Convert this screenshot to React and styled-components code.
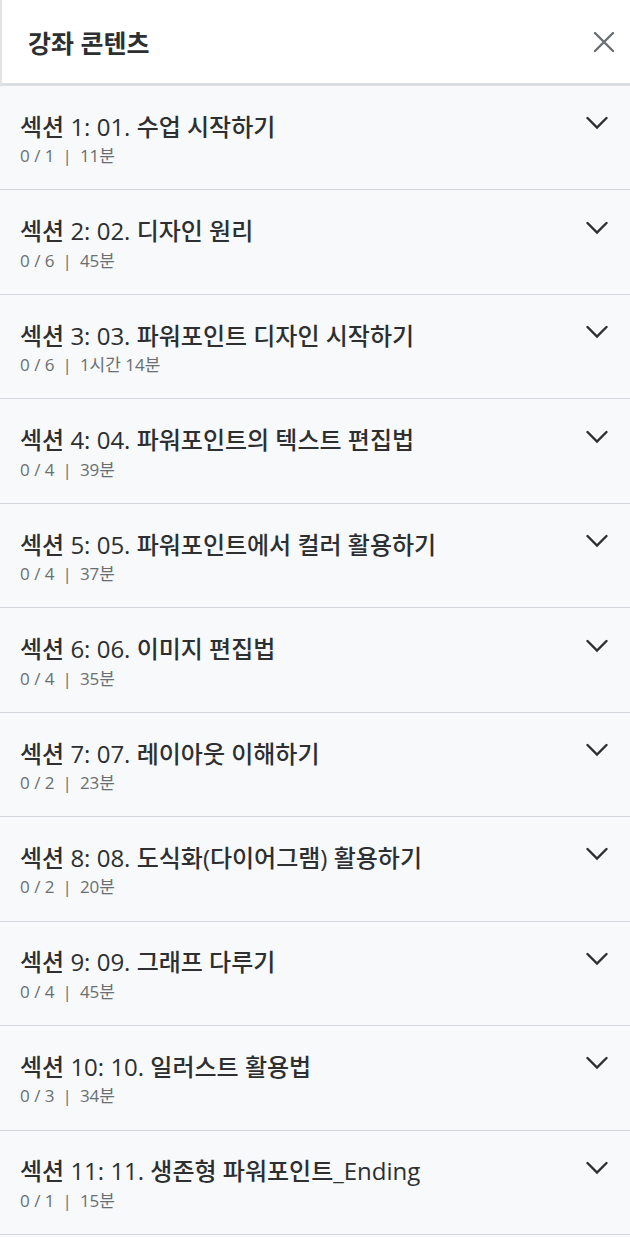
import React from "react";
import styled, { createGlobalStyle } from "styled-components";

const sections = [
  { title: "섹션 1: 01. 수업 시작하기", done: 0, total: 1, time: "11분" },
  { title: "섹션 2: 02. 디자인 원리", done: 0, total: 6, time: "45분" },
  { title: "섹션 3: 03. 파워포인트 디자인 시작하기", done: 0, total: 6, time: "1시간 14분" },
  { title: "섹션 4: 04. 파워포인트의 텍스트 편집법", done: 0, total: 4, time: "39분" },
  { title: "섹션 5: 05. 파워포인트에서 컬러 활용하기", done: 0, total: 4, time: "37분" },
  { title: "섹션 6: 06. 이미지 편집법", done: 0, total: 4, time: "35분" },
  { title: "섹션 7: 07. 레이아웃 이해하기", done: 0, total: 2, time: "23분" },
  { title: "섹션 8: 08. 도식화(다이어그램) 활용하기", done: 0, total: 2, time: "20분" },
  { title: "섹션 9: 09. 그래프 다루기", done: 0, total: 4, time: "45분" },
  { title: "섹션 10: 10. 일러스트 활용법", done: 0, total: 3, time: "34분" },
  { title: "섹션 11: 11. 생존형 파워포인트_Ending", done: 0, total: 1, time: "15분" },
];

const CloseIcon = () => (
  <svg width="22" height="22" viewBox="0 0 22 22" fill="none">
    <path d="M2 2 L20 20 M20 2 L2 20" stroke="currentColor" strokeWidth="2.4" strokeLinecap="round" />
  </svg>
);

const ChevronIcon = () => (
  <svg width="22" height="14" viewBox="0 0 22 14" fill="none">
    <path d="M1.5 2 L11 11.5 L20.5 2" stroke="currentColor" strokeWidth="2.4" strokeLinecap="round" strokeLinejoin="miter" />
  </svg>
);

const App = () => {
  return (
    <>
      <GlobalStyle />
      <Panel>
        <Header>
          <HeaderTitle>강좌 콘텐츠</HeaderTitle>
          <CloseButton aria-label="닫기">
            <CloseIcon />
          </CloseButton>
        </Header>
        <List>
          {sections.map((s) => (
            <Section key={s.title}>
              <SectionText>
                <SectionTitle>{s.title}</SectionTitle>
                <SectionMeta>
                  {s.done} / {s.total}
                  <Divider>|</Divider>
                  {s.time}
                </SectionMeta>
              </SectionText>
              <Toggle>
                <ChevronIcon />
              </Toggle>
            </Section>
          ))}
        </List>
      </Panel>
    </>
  );
};

const GlobalStyle = createGlobalStyle`
  body {
    margin: 0;
    background: #f7f9fa;
    font-family: "Open Sans", "Noto Sans CJK KR", sans-serif;
  }
`;

const Panel = styled.div`
  width: 630px;
  display: flex;
  flex-direction: column;
  background: #f7f9fa;
`;

const Header = styled.div`
  display: flex;
  align-items: center;
  justify-content: space-between;
  height: 86px;
  padding: 0 15px 0 26px;
  background: #fff;
  border-left: 2px solid #e2e4e6;
  border-bottom: 3px solid #dcdfe2;
  box-sizing: border-box;
`;

const HeaderTitle = styled.h2`
  margin: 0;
  font-size: 25px;
  font-weight: 700;
  color: #2d2f31;
`;

const CloseButton = styled.button`
  display: flex;
  align-items: center;
  justify-content: center;
  padding: 0;
  border: none;
  background: none;
  color: #6a6f73;
  cursor: pointer;
`;

const List = styled.div`
  display: flex;
  flex-direction: column;
`;

const Section = styled.div`
  display: flex;
  align-items: flex-start;
  justify-content: space-between;
  padding: 25.6px 22px 22.4px 20px;
  border-bottom: 1px solid #d1d7dc;
`;

const SectionText = styled.div`
  display: flex;
  flex-direction: column;
  gap: 3.5px;
`;

const SectionTitle = styled.div`
  font-size: 24px;
  line-height: 30px;
  font-weight: 500;
  color: #2d2f31;
`;

const SectionMeta = styled.div`
  font-size: 17px;
  line-height: 22px;
  color: #6a6f73;
`;

const Divider = styled.span`
  margin: 0 8px;
`;

const Toggle = styled.span`
  display: flex;
  padding-top: 4.5px;
  color: #2d2f31;
`;

export default App;
